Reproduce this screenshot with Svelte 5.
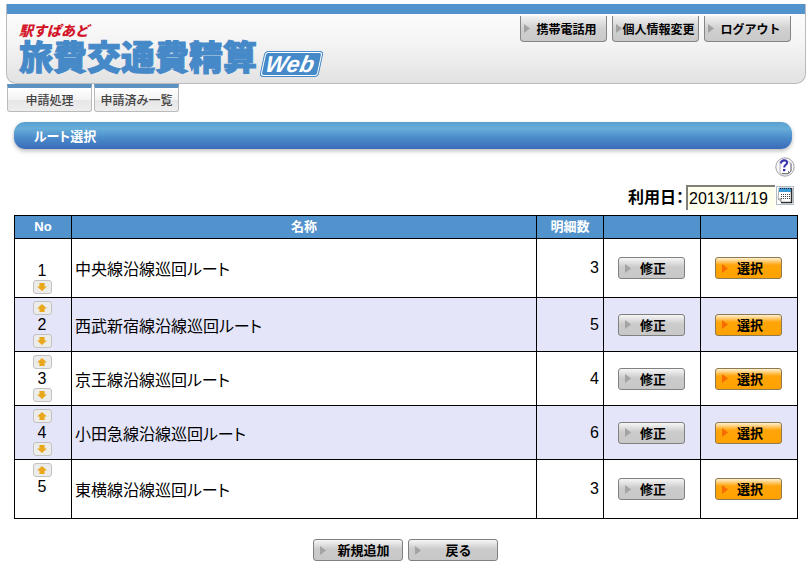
<script lang="ts">
  let routes = $state([
    { id: 1, name: "中央線沿線巡回ルート", count: 3 },
    { id: 2, name: "西武新宿線沿線巡回ルート", count: 5 },
    { id: 3, name: "京王線沿線巡回ルート", count: 4 },
    { id: 4, name: "小田急線沿線巡回ルート", count: 6 },
    { id: 5, name: "東横線沿線巡回ルート", count: 3 },
  ]);
  let useDate = $state("2013/11/19");

  function move(index: number, step: number) {
    const [route] = routes.splice(index, 1);
    routes.splice(index + step, 0, route);
  }
</script>

{#snippet arrow()}
  <svg class="arrow" viewBox="0 0 6 9" aria-hidden="true">
    <path d="M0 0 L6 4.5 L0 9 z" />
  </svg>
{/snippet}

{#snippet mover(index: number, step: number, label: string)}
  <button type="button" class="move" aria-label={label} onclick={() => move(index, step)}>
    <svg viewBox="0 0 10 8" aria-hidden="true">
      {#if step < 0}
        <path d="M5 0 L10 4.4 H7.6 V8 H2.4 V4.4 H0 z" />
      {:else}
        <path d="M5 8 L10 3.6 H7.6 V0 H2.4 V3.6 H0 z" />
      {/if}
    </svg>
  </button>
{/snippet}

<header>
  <h1>
    <span class="brand">駅すぱあど</span>
    <span class="product">旅費交通費精算 <span class="web">Web</span></span>
  </h1>
  <div class="user-menu">
    <button type="button">{@render arrow()}<span>携帯電話用</span></button>
    <button type="button">{@render arrow()}<span>個人情報変更</span></button>
    <button type="button">{@render arrow()}<span>ログアウト</span></button>
  </div>
</header>

<nav>
  <a href="#apply">申請処理</a>
  <a href="#applied">申請済み一覧</a>
</nav>

<main>
  <h2>ルート選択</h2>

  <div class="tools">
    <button type="button" class="help" aria-label="ヘルプ">
      <svg viewBox="0 0 20 20" aria-hidden="true">
        <circle cx="10" cy="10" r="9.2" fill="#f8f8fa" stroke="#a0a0a4" />
        <path d="M5 4.5 h8 l3 1.5 v8 l-2.5 3 h-7.5 l-1-1.5 z" fill="#fff" stroke="#b4b4bc" />
        <path d="M7 16.5 h6.5 l2.5-2.5 V6.5 M13.5 14 v2.5" fill="none" stroke="#77777f" />
        <path
          d="M6 6.5 C6 2.2 12.5 2.2 12 5.8 C11.8 8 9.2 7.6 9.2 10.5"
          fill="none"
          stroke="#3434ae"
          stroke-width="2"
        />
        <rect x="8" y="12" width="2.4" height="2.2" fill="#3434ae" />
      </svg>
    </button>
  </div>

  <div class="date">
    <label for="use-date">利用日：</label>
    <input id="use-date" type="text" bind:value={useDate} />
    <button type="button" class="calendar" aria-label="カレンダー">
      <svg viewBox="0 0 18 19" aria-hidden="true">
        <rect x="0.5" y="0.5" width="17" height="18" fill="none" stroke="#678" stroke-dasharray="1 1" />
        <path d="M5 16.5 H15.5 V2" fill="none" stroke="#111" stroke-width="1.6" />
        <path d="M3 2 h12 v14 h-10 l-3-3 z" fill="#fff" stroke="#777" stroke-width="0.6" />
        <rect x="3" y="2" width="12" height="4" fill="#3c9bd4" />
        <path d="M4 2.5 h11" stroke="#124" stroke-dasharray="1 1" />
        <path d="M5 8.5 h9 M5 10.5 h9 M5 12.5 h9" stroke="#444" stroke-dasharray="1 1" />
        <path d="M2 13 h3 v3" fill="#ddd" stroke="#555" stroke-width="0.6" />
      </svg>
    </button>
  </div>

  <table>
    <thead>
      <tr>
        <th class="no">No</th>
        <th>名称</th>
        <th class="count">明細数</th>
        <th class="action" aria-label="修正"></th>
        <th class="action" aria-label="選択"></th>
      </tr>
    </thead>
    <tbody>
      {#each routes as route, i (route.id)}
        <tr>
          <td class="order">
            {#if i > 0}
              {@render mover(i, -1, "上へ")}
            {:else}
              <div class="blank"></div>
            {/if}
            <div class="num">{i + 1}</div>
            {#if i < routes.length - 1}
              {@render mover(i, 1, "下へ")}
            {:else}
              <div class="blank"></div>
            {/if}
          </td>
          <td class="name">{route.name}</td>
          <td class="amount">{route.count}</td>
          <td class="cell">
            <button type="button" class="btn">{@render arrow()}<span>修正</span></button>
          </td>
          <td class="cell">
            <button type="button" class="btn select">{@render arrow()}<span>選択</span></button>
          </td>
        </tr>
      {/each}
    </tbody>
  </table>

  <div class="footer">
    <button type="button" class="btn wide">{@render arrow()}<span>新規追加</span></button>
    <button type="button" class="btn wide">{@render arrow()}<span>戻る</span></button>
  </div>
</main>

<style>
  :global(body) {
    background: #fff;
    color: #000;
    font-family: "Liberation Sans", "Noto Sans CJK JP", sans-serif;
    font-size: 16px;
  }

  button {
    font-family: inherit;
    color: #000;
    cursor: pointer;
  }

  header {
    display: flex;
    justify-content: space-between;
    align-items: flex-start;
    box-sizing: border-box;
    min-height: 80px;
    margin: 4px 6px 0;
    padding: 12px 14px 0 12px;
    border: solid #b9babd;
    border-width: 0 1px 1px;
    border-radius: 0 0 10px 10px;
    background:
      linear-gradient(#5393cd, #5393cd) top / 100% 10px no-repeat,
      linear-gradient(#fefefe, #f4f4f4 50%, #e2e2e2);
  }

  h1 {
    margin: 0;
    padding-top: 8px;
    font-size: 34px;
    line-height: 40px;
    white-space: nowrap;
  }

  .brand {
    display: block;
    color: #d3172b;
    font-size: 14px;
    font-style: italic;
    font-weight: 900;
    line-height: 14px;
  }

  .product {
    display: flex;
    align-items: center;
    gap: 5px;
    color: #4689c8;
    font-weight: 900;
    -webkit-text-stroke: 1px #4689c8;
  }

  .web {
    margin-top: 12px;
    padding: 0 6px 0 3px;
    border: 1px solid #4689c8;
    border-radius: 4px;
    outline: 1px solid #fff;
    outline-offset: -2px;
    background: #4689c8;
    color: #fff;
    font-size: 23px;
    font-style: italic;
    line-height: 24px;
    transform: skewX(-12deg);
    -webkit-text-stroke: 0;
  }

  .user-menu {
    display: flex;
    gap: 5px;
  }

  .user-menu button {
    display: flex;
    align-items: center;
    width: 87px;
    height: 26px;
    padding: 0 3px;
    border: 1px solid #858585;
    border-top: 0;
    border-radius: 0 0 4px 4px;
    background: linear-gradient(#f2f2f2, #d0d0d0 50%, #c9c9c9);
    font-size: 12px;
    font-weight: 700;
    white-space: nowrap;
  }

  .user-menu span {
    flex: 1;
  }

  .arrow {
    flex: none;
    width: 6px;
    height: 9px;
    fill: #a3a3a3;
  }

  nav {
    display: flex;
    gap: 2px;
    margin: 0 7px;
  }

  nav a {
    box-sizing: border-box;
    width: 85px;
    height: 28px;
    border: 1px solid #bbb;
    border-top: 4px solid #5b92c1;
    border-radius: 0 0 3px 3px;
    background: linear-gradient(#fff, #f3f3f3 50%, #e6e6e6 51%, #eee);
    color: #444;
    font-size: 12px;
    font-weight: 500;
    line-height: 26px;
    text-align: center;
    text-decoration: none;
  }

  main {
    margin: 10px 14px;
  }

  h2 {
    margin: 0 6px 0 0;
    padding: 2px 20px 0;
    border-radius: 11px;
    background: linear-gradient(#5a9fd0, #67add9 25%, #4a8aca 60%, #3a6bb8);
    box-shadow: 0 2px 4px #bbb;
    color: #fff;
    font-size: 13px;
    line-height: 25px;
    font-feature-settings: "palt";
  }

  .tools {
    display: flex;
    justify-content: flex-end;
    padding: 8px 3px 0 0;
  }

  .help,
  .calendar {
    display: block;
    padding: 0;
    border: 0;
    background: none;
  }

  .help {
    width: 20px;
    height: 20px;
  }

  .help svg,
  .calendar svg {
    display: block;
  }

  .date {
    display: flex;
    justify-content: flex-end;
    padding: 8px 4px 5px 0;
  }

  .date label {
    font-weight: 700;
    line-height: 25px;
    font-feature-settings: "palt";
  }

  .date input {
    box-sizing: border-box;
    width: 89px;
    height: 25px;
    margin: 0 1px 0 2px;
    padding: 0 1px;
    border: solid #808078;
    border-width: 2px 0 0 2px;
    background: #ffffee;
    color: #000;
    font: inherit;
  }

  .calendar {
    width: 18px;
    height: 19px;
    margin-top: 1px;
  }

  table {
    width: 100%;
    border-collapse: collapse;
    table-layout: fixed;
  }

  th,
  td {
    padding: 0;
    border: 1px solid #000;
  }

  th {
    height: 22px;
    background: #5393cd;
    color: #fff;
    font-size: 13px;
    line-height: 22px;
  }

  .no {
    width: 56px;
  }

  .count {
    width: 66px;
  }

  .action {
    width: 96px;
  }

  tbody tr:nth-child(even) {
    background: #e4e5f8;
  }

  .order {
    padding: 3px 2px 3px 0;
    text-align: center;
  }

  .num {
    line-height: 19px;
  }

  .blank {
    height: 19px;
  }

  .move {
    display: flex;
    align-items: center;
    justify-content: center;
    box-sizing: border-box;
    width: 19px;
    height: 14px;
    margin: 0 auto;
    padding: 0;
    border: 1px solid #c2c2c2;
    border-radius: 3px;
    background: #ececea;
  }

  .move svg {
    width: 10px;
    height: 8px;
    fill: #e9a81c;
  }

  .name {
    padding-left: 3px;
    font-weight: 400;
    font-feature-settings: "palt";
  }

  .amount {
    padding-right: 4px;
    text-align: right;
  }

  .cell {
    padding: 0 2px 0 0;
  }

  .btn {
    display: flex;
    align-items: center;
    box-sizing: border-box;
    width: 67px;
    height: 22px;
    margin: 0 auto;
    padding: 0 0 0 6px;
    border: 1px solid #808080;
    border-radius: 3px;
    background: linear-gradient(#f6f6f6, #cbcbcb 45%, #c8c8c8);
    font-size: 13px;
    font-weight: 700;
    line-height: 20px;
  }

  .btn span {
    flex: 1;
    padding: 2px 8px 0 0;
  }

  .select {
    border-color: #8d7a50;
    background: linear-gradient(#fff0d0, #ffa50a 35%, #ffa200);
  }

  .select .arrow {
    fill: #f76b00;
  }

  .wide {
    width: 90px;
    margin: 0;
  }

  .wide span {
    padding-right: 0;
  }

  .footer {
    display: flex;
    justify-content: center;
    gap: 5px;
    padding: 20px 2px 0 0;
  }
</style>
